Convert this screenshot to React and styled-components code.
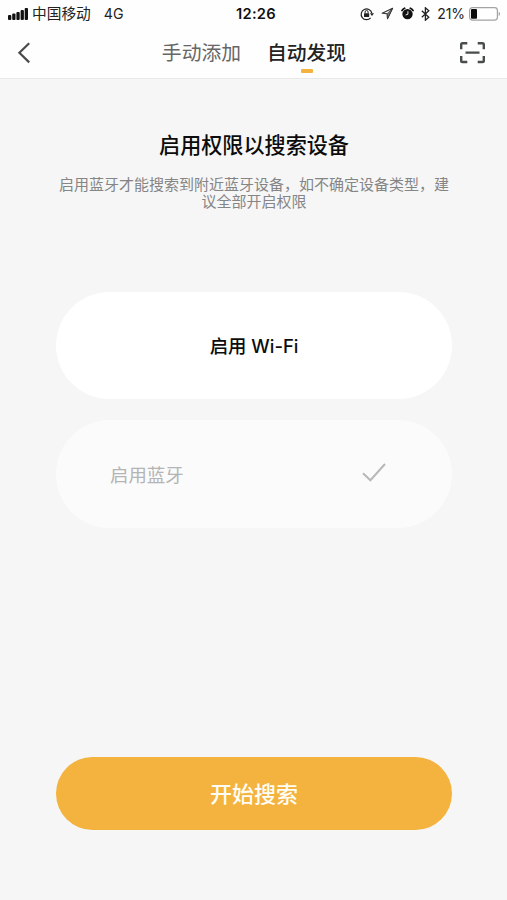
import React from 'react';
import styled, { createGlobalStyle } from 'styled-components';

const GlobalStyle = createGlobalStyle`
  * {
    box-sizing: border-box;
  }

  body {
    margin: 0;
    background-color: #f6f6f6;
    font-family: Inter, 'Noto Sans CJK SC', sans-serif;
  }

  button {
    margin: 0;
    padding: 0;
    border: none;
    background: none;
    font-family: inherit;
  }

  svg {
    display: block;
    flex-shrink: 0;
  }
`;

const Page = styled.div`
  display: flex;
  flex-direction: column;
  width: 507px;
  height: 900px;
  overflow: hidden;
`;

const Header = styled.header`
  height: 79px;
  background-color: #fefefe;
  border-bottom: 1px solid #e9e9e9;
`;

const StatusBar = styled.div`
  display: grid;
  grid-template-columns: 1fr auto 1fr;
  align-items: center;
  height: 27px;
  padding: 0 6px 0 8px;
  color: #222;
  font-size: 14.7px;
  line-height: 20px;
`;

const Carrier = styled.div`
  display: flex;
  align-items: center;
  gap: 4px;
`;

const CarrierName = styled.span`
  padding-top: 1px;
`;

const Network = styled.span`
  margin-left: 9px;
  font-size: 14.2px;
`;

const Clock = styled.span`
  padding-left: 3px;
  color: #111;
  font-size: 14.7px;
  font-weight: 600;
  letter-spacing: 0.25px;
`;

const StatusIcons = styled.div`
  display: flex;
  align-items: center;
  justify-content: flex-end;
`;

const Indicators = styled.div`
  display: flex;
  align-items: center;
  gap: 7px;
`;

const Battery = styled.span`
  margin: 0 4px 0 7px;
  font-size: 14px;
  letter-spacing: -0.1px;
`;

const NavBar = styled.nav`
  display: grid;
  grid-template-columns: 1fr auto 1fr;
  align-items: center;
  height: 51px;
  padding: 0 21px 0 16px;
`;

const IconButton = styled.button`
  display: flex;
  justify-self: ${({ $end }) => ($end ? 'end' : 'start')};
`;

const Tabs = styled.div`
  display: flex;
  gap: 26px;
  padding-left: 6px;
`;

const Tab = styled.button`
  position: relative;
  color: ${({ $active }) => ($active ? '#222' : '#666')};
  font-size: 19.8px;
  font-weight: ${({ $active }) => ($active ? 500 : 400)};
  line-height: 30px;

  &::after {
    content: '';
    display: ${({ $active }) => ($active ? 'block' : 'none')};
    position: absolute;
    bottom: -5px;
    left: 50%;
    width: 12px;
    height: 4px;
    margin-left: -6px;
    border-radius: 1px;
    background-color: #f3b33e;
  }
`;

const Content = styled.main`
  display: flex;
  flex: 1;
  flex-direction: column;
  padding: 51px 55px 70px 56px;
`;

const Title = styled.h1`
  margin: 0;
  color: #0c0c0c;
  font-size: 21.1px;
  font-weight: 500;
  line-height: 32px;
  text-align: center;
`;

const Description = styled.p`
  margin: 14px 0 0;
  color: #858585;
  font-size: 15px;
  line-height: 17px;
  text-align: center;
`;

const Options = styled.div`
  display: flex;
  flex-direction: column;
  gap: 21px;
  margin-top: 82px;
`;

const Option = styled.button`
  display: flex;
  align-items: center;
  justify-content: ${({ $done }) => ($done ? 'space-between' : 'center')};
  height: ${({ $done }) => ($done ? 108 : 107)}px;
  padding: ${({ $done }) => ($done ? '0 66px 0 54px' : '0 54px 2px')};
  border-radius: 54px;
  background-color: ${({ $done }) => ($done ? '#fbfbfb' : '#fff')};
  color: ${({ $done }) => ($done ? '#b4b4b4' : '#0c0c0c')};
  font-size: 18.4px;
  font-weight: ${({ $done }) => ($done ? 400 : 500)};
`;

const SearchButton = styled.button`
  height: 73px;
  margin-top: auto;
  padding-bottom: 4px;
  border-radius: 37px;
  background-color: #f3b33e;
  color: #fffdf5;
  font-size: 22px;
  font-weight: 500;
`;

const SignalIcon = () => (
  <svg width="20" height="12" viewBox="0 0 20 12" fill="#111">
    <rect x="0" y="7" width="3.3" height="5" rx="1" />
    <rect x="4.2" y="5.5" width="3.3" height="6.5" rx="1" />
    <rect x="8.4" y="4" width="3.3" height="8" rx="1" />
    <rect x="12.6" y="2" width="3.3" height="10" rx="1" />
    <rect x="16.7" y="0" width="3.3" height="12" rx="1" />
  </svg>
);

const RotationLockIcon = () => (
  <svg width="14" height="14" viewBox="0 0 14 14" fill="none" stroke="#222">
    <path d="M10.6 10.9A5.4 5.4 0 1 1 11.8 6" strokeWidth="1.2" />
    <path d="M9.9 6.3H14l-2 2.6z" fill="#222" stroke="none" />
    <rect x="4" y="6.2" width="5.2" height="3.8" rx="0.5" fill="#222" stroke="none" />
    <path d="M5.1 6.3V5a1.5 1.5 0 0 1 3 0v1.3" strokeWidth="1" />
  </svg>
);

const LocationIcon = () => (
  <svg width="13" height="13" viewBox="0 0 13 13" fill="none" stroke="#333" strokeWidth="1.1" strokeLinejoin="round">
    <path d="M11.6 1.2L1.2 6.2l5 .5.3 5z" />
    <path d="M11.6 1.2L6.2 6.7l.3 5z" fill="#777" strokeWidth="0.7" />
  </svg>
);

const AlarmIcon = () => (
  <svg width="13" height="13" viewBox="0 0 13 13">
    <circle cx="6.5" cy="7.1" r="5.2" fill="#111" />
    <path d="M1 3.5A8 8 0 0 1 3.6 1.3M9.4 1.3A8 8 0 0 1 12 3.5" fill="none" stroke="#111" strokeWidth="1.8" strokeLinecap="round" />
    <path d="M6.9 4.2v3.1L4.6 7.9" fill="none" stroke="#fff" strokeWidth="0.9" />
  </svg>
);

const BluetoothIcon = () => (
  <svg width="9" height="14" viewBox="0 0 9 14" fill="none" stroke="#222" strokeWidth="1.3">
    <path d="M.8 3.8l7 6.4-3.4 3V.8l3.4 3-7 6.4" />
  </svg>
);

const BatteryIcon = () => (
  <svg width="32" height="14" viewBox="0 0 32 14">
    <rect x="0.6" y="0.7" width="27.8" height="12.4" rx="2.8" fill="#fff" stroke="#a3a3a3" strokeWidth="1.2" />
    <rect x="2" y="2.1" width="6" height="9.6" rx="1" fill="#0c0c0c" />
    <path d="M29.7 4.8c1.7.5 1.7 3.7 0 4.2z" fill="#a3a3a3" />
  </svg>
);

const BackIcon = () => (
  <svg width="16" height="22" viewBox="0 0 16 22" fill="none" stroke="#484c4b" strokeWidth="2.2">
    <path d="M13.2 1.2L3.4 10.8l9.8 9.6" />
  </svg>
);

const ScanIcon = () => (
  <svg width="27" height="24" viewBox="0 0 27 24" fill="none" stroke="#484c4b" strokeWidth="2.4">
    <path d="M2.2 8.2V3.5q0-1.3 1.3-1.3h4.8M18.7 2.2h4.8q1.3 0 1.3 1.3v4.7M24.8 15v4.7q0 1.3-1.3 1.3h-4.8M8.3 21H3.5q-1.3 0-1.3-1.3V15M6.5 11.6h14" />
  </svg>
);

const CheckIcon = () => (
  <svg width="24" height="22" viewBox="0 0 24 22" fill="none" stroke="#b8b8b8" strokeWidth="2">
    <path d="M1 10.2l7.4 7L23 1" />
  </svg>
);

function App() {
  return (
    <>
      <GlobalStyle />
      <Page>
        <Header>
          <StatusBar>
            <Carrier>
              <SignalIcon />
              <CarrierName>中国移动</CarrierName>
              <Network>4G</Network>
            </Carrier>
            <Clock>12:26</Clock>
            <StatusIcons>
              <Indicators>
                <RotationLockIcon />
                <LocationIcon />
                <AlarmIcon />
                <BluetoothIcon />
              </Indicators>
              <Battery>21%</Battery>
              <BatteryIcon />
            </StatusIcons>
          </StatusBar>
          <NavBar>
            <IconButton aria-label="返回">
              <BackIcon />
            </IconButton>
            <Tabs>
              <Tab>手动添加</Tab>
              <Tab $active>自动发现</Tab>
            </Tabs>
            <IconButton $end aria-label="扫一扫">
              <ScanIcon />
            </IconButton>
          </NavBar>
        </Header>
        <Content>
          <Title>启用权限以搜索设备</Title>
          <Description>启用蓝牙才能搜索到附近蓝牙设备，如不确定设备类型，建议全部开启权限</Description>
          <Options>
            <Option>启用 Wi-Fi</Option>
            <Option $done>
              启用蓝牙
              <CheckIcon />
            </Option>
          </Options>
          <SearchButton>开始搜索</SearchButton>
        </Content>
      </Page>
    </>
  );
}

export default App;
